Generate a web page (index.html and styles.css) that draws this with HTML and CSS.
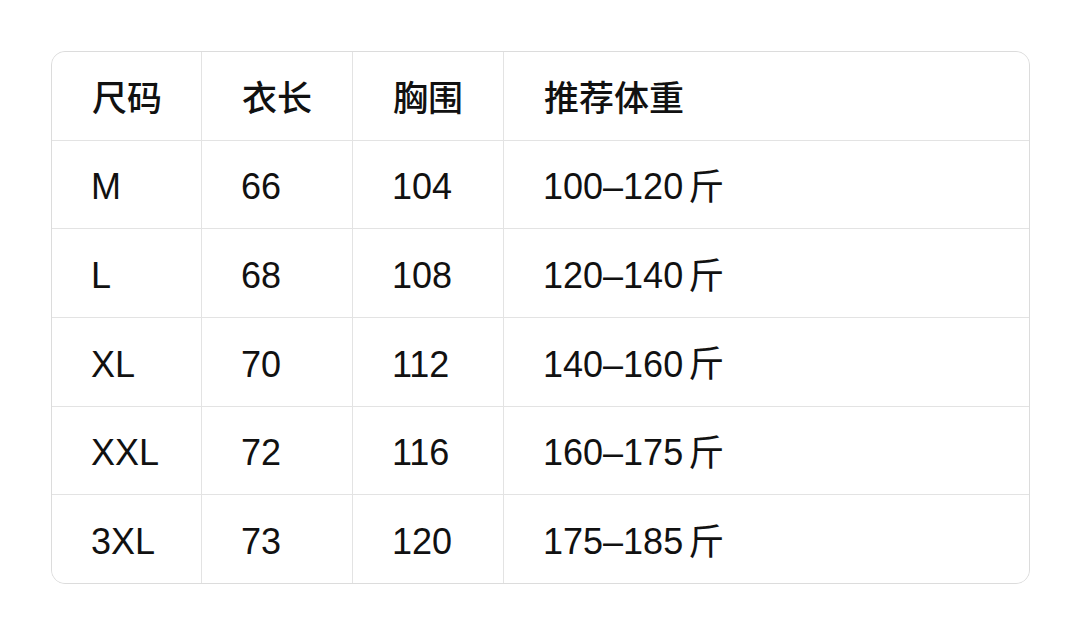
FILE: index.html
```html
<!DOCTYPE html>
<html lang="zh-CN">
<head>
<meta charset="utf-8">
<title>尺码表</title>
<link rel="stylesheet" href="styles.css">
</head>
<body>
<div class="size-table">
  <div class="cell head">尺码</div>
  <div class="cell head">衣长</div>
  <div class="cell head">胸围</div>
  <div class="cell head">推荐体重</div>

  <div class="cell">M</div>
  <div class="cell">66</div>
  <div class="cell">104</div>
  <div class="cell">100–120<span class="unit">斤</span></div>

  <div class="cell">L</div>
  <div class="cell">68</div>
  <div class="cell">108</div>
  <div class="cell">120–140<span class="unit">斤</span></div>

  <div class="cell">XL</div>
  <div class="cell">70</div>
  <div class="cell">112</div>
  <div class="cell">140–160<span class="unit">斤</span></div>

  <div class="cell">XXL</div>
  <div class="cell">72</div>
  <div class="cell">116</div>
  <div class="cell">160–175<span class="unit">斤</span></div>

  <div class="cell">3XL</div>
  <div class="cell">73</div>
  <div class="cell">120</div>
  <div class="cell">175–185<span class="unit">斤</span></div>
</div>
</body>
</html>
```

FILE: styles.css
```css
html, body {
  margin: 0;
  padding: 0;
  background: #ffffff;
}

body {
  padding: 51px 50px 0 51px;
  font-family: "Liberation Sans", "Noto Sans CJK SC", sans-serif;
  color: #111111;
}

.size-table {
  width: 979px;
  height: 533px;
  box-sizing: border-box;
  border: 1px solid #dcdcdc;
  border-radius: 14px;
  overflow: hidden;
  display: grid;
  grid-template-columns: 149px 150px 150px 1fr;
  grid-template-rows: repeat(6, 1fr);
  gap: 1px;
  background: #e3e3e3;
}

.cell {
  background: #ffffff;
  display: flex;
  align-items: center;
  padding-left: 39px;
  padding-top: 6px;
  font-size: 36px;
  line-height: 1;
}

.head {
  font-family: "Noto Sans CJK SC", sans-serif;
  font-weight: 500;
  font-size: 35px;
  padding-left: 40px;
  padding-top: 0;
}

.unit {
  font-family: "Noto Sans CJK SC", sans-serif;
  margin-left: 5px;
  margin-bottom: 7px;
}
```
